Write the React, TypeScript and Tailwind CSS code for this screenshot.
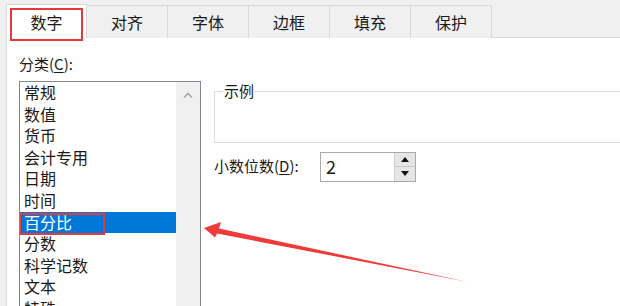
const TABS = ["数字", "对齐", "字体", "边框", "填充", "保护"];
const ITEMS = ["常规", "数值", "货币", "会计专用", "日期", "时间", "百分比", "分数", "科学记数", "文本", "特殊"];

export default function App() {
  return (
    <div className="relative w-[620px] h-[306px] overflow-hidden bg-[#f0f0f0] text-[#1a1a1a] font-['Noto_Sans_CJK_SC','Noto_Sans',sans-serif] flex flex-col">
      {/* tab strip */}
      <div className="flex pl-[6px] pt-[4px] h-[38px] shrink-0">
        {TABS.map((t, i) => (
          <div
            key={t}
            className={
              i === 0
                ? "w-[81px] h-[34px] bg-white border-l border-t border-r border-[#d9d9d9] flex items-center justify-center text-[16px] relative z-10"
                : "w-[81px] h-[34px] mt-[1px] bg-[#f0f0f0] border-t border-r border-b border-[#dadada] flex items-center justify-center text-[16px]"
            }
          >
            {t}
          </div>
        ))}
        <div className="flex-1 border-b border-[#dadada]" />
      </div>

      {/* panel */}
      <div className="flex-1 ml-[6px] bg-white border-l border-[#d9d9d9] pl-[12px] pt-[16px]">
        <div className="text-[15px] leading-[20px] h-[20px]">
          分类(<span className="underline underline-offset-2">C</span>):
        </div>
        <div className="flex mt-[7px] gap-[13px]">
          {/* list box */}
          <div className="w-[182px] h-[240px] border-l border-t border-r border-[#828790] flex shrink-0 overflow-hidden">
            <div className="w-[156px] flex flex-col">
              {ITEMS.map((it, i) => (
                <div
                  key={it}
                  className={
                    i === 6
                      ? "relative h-[21.6px] shrink-0 pl-[4px] text-[16px] leading-[21.6px] bg-[#0078d7] text-white"
                      : "h-[21.6px] shrink-0 pl-[4px] text-[16px] leading-[21.6px]"
                  }
                >
                  {it}
                  {i === 6 && (
                    <div className="absolute left-[-1px] top-[1px] w-[86px] h-[22px] border-2 border-[#e5393d]" />
                  )}
                </div>
              ))}
            </div>
            <div className="w-[24px] bg-[#f0f0f0] flex justify-center pt-[10px]">
              <svg width="10" height="6" viewBox="0 0 10 6">
                <path d="M1 5.5 L5 1.5 L9 5.5" fill="none" stroke="#a6a6a6" strokeWidth="1.6" />
              </svg>
            </div>
          </div>

          {/* right column */}
          <div className="flex-1 flex flex-col">
            <div className="relative mt-[10px] h-[52px] border-l border-t border-b border-[#dcdcdc]">
              <span className="absolute left-[8px] top-[-11px] bg-white px-[1px] text-[15px] leading-[20px]">示例</span>
            </div>
            <div className="flex items-center mt-[8px] h-[31px]">
              <span className="text-[15px] w-[106px]">
                小数位数(<span className="underline underline-offset-2">D</span>):
              </span>
              <div className="w-[96px] h-[30px] border border-[#a9a9a9] flex">
                <div className="flex-1 pl-[5px] text-[18px] leading-[26px]">2</div>
                <div className="w-[21px] flex flex-col border-l border-[#d0d0d0] bg-[#e6e6e6]">
                  <div className="flex-1 flex items-center justify-center border-b border-[#c8c8c8]">
                    <svg width="8" height="5" viewBox="0 0 8 5"><path d="M0 5 L4 0 L8 5 Z" fill="#111" /></svg>
                  </div>
                  <div className="flex-1 flex items-center justify-center">
                    <svg width="8" height="5" viewBox="0 0 8 5"><path d="M0 0 L8 0 L4 5 Z" fill="#111" /></svg>
                  </div>
                </div>
              </div>
            </div>
          </div>
        </div>
      </div>

      {/* red highlight on selected tab */}
      <div className="absolute z-20 left-[10px] top-[8px] w-[73px] h-[33px] border-2 border-[#e5393d]" />

      {/* annotation arrow */}
      <svg className="absolute z-20 left-0 top-0 pointer-events-none" width="620" height="306">
        <polygon points="204,228 221,222 219,228.5 468,282 217,233.5 215,237.5" fill="#f03a3a" />
      </svg>
    </div>
  );
}
